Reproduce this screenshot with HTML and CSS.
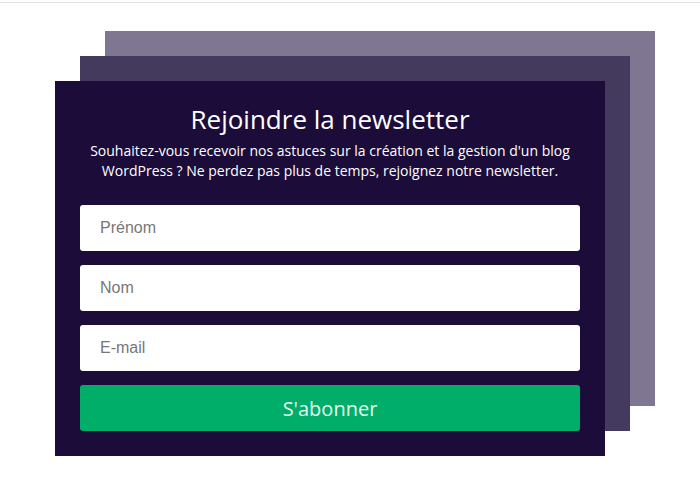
FILE: index.html
```html
<!DOCTYPE html>
<html lang="fr">
<head>
<meta charset="utf-8">
<title>Newsletter</title>
<link rel="stylesheet" href="styles.css">
</head>
<body>
<div class="top-rule"></div>
<main class="stage">
  <section class="card">
    <h1 class="title">Rejoindre la newsletter</h1>
    <p class="desc">Souhaitez-vous recevoir nos astuces sur la création et la gestion d'un blog WordPress ? Ne perdez pas plus de temps, rejoignez notre newsletter.</p>
    <form class="form">
      <input class="field" type="text" placeholder="Prénom">
      <input class="field" type="text" placeholder="Nom">
      <input class="field" type="email" placeholder="E-mail">
      <button class="submit" type="button">S'abonner</button>
    </form>
  </section>
</main>
</body>
</html>
```
FILE: styles.css
```css
html, body {
  margin: 0;
  padding: 0;
  background: #ffffff;
}
body {
  width: 700px;
  height: 490px;
  overflow: hidden;
  font-family: "Open Sans", "DejaVu Sans", sans-serif;
}
.top-rule {
  margin-top: 2px;
  height: 1px;
  background: #e3e3e3;
}
.stage {
  padding: 78px 0 0 55px;
}
.card {
  box-sizing: border-box;
  width: 550px;
  height: 375px;
  background: #1c0c3a;
  box-shadow: 25px -25px 0 0 #433a5d, 50px -50px 0 0 #7f7791;
  padding: 21px 25px 25px;
  display: flex;
  flex-direction: column;
}
.title {
  margin: 0;
  font-size: 26px;
  line-height: 34px;
  font-weight: 400;
  color: #ffffff;
  text-align: center;
}
.desc {
  margin: 5px -10px 0;
  font-size: 14px;
  line-height: 20px;
  color: #ffffff;
  text-align: center;
}
.form {
  margin-top: 24px;
  display: flex;
  flex-direction: column;
  gap: 14px;
}
.field {
  box-sizing: border-box;
  height: 46px;
  width: 100%;
  border: none;
  border-radius: 3px;
  background: #ffffff;
  padding: 0 20px;
  font-family: "Liberation Sans", Arial, sans-serif;
  font-size: 16px;
  color: #333;
  outline: none;
}
.field::placeholder {
  color: #777777;
}
.submit {
  height: 46px;
  width: 100%;
  border: none;
  border-radius: 3px;
  background: #00ad69;
  color: #e6fbef;
  font-family: "Open Sans", "DejaVu Sans", sans-serif;
  font-size: 20px;
  padding: 0;
  cursor: pointer;
}
```
